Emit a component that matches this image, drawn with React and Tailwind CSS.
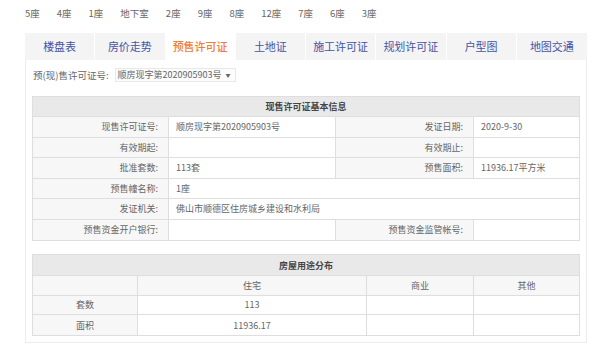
import React from "react";

const buildings = ["5座", "4座", "1座", "地下室", "2座", "9座", "8座", "12座", "7座", "6座", "3座"];
const tabs = ["楼盘表", "房价走势", "预售许可证", "土地证", "施工许可证", "规划许可证", "户型图", "地图交通"];

function Label({ children, w }) {
    return (
        <div className={`${w} h-full flex items-center justify-end pr-[10px] bg-[#f7f7f7] border-r border-[#dedede]`}>
            {children}
        </div>
    );
}

function Value({ children, w }) {
    return (
        <div className={`${w} h-full flex items-center pl-[7px] border-r border-[#dedede] last:border-r-0`}>
            {children}
        </div>
    );
}

export default function App() {
    return (
        <div className="w-[600px] h-[345px] overflow-hidden bg-white text-[#666] font-['Noto_Sans_CJK_SC','Liberation_Sans',sans-serif]">
            {/* building list */}
            <div className="flex items-center gap-[17px] pl-[25px] pt-[7px] h-[33px] text-[9.5px] leading-none pb-[12px]">
                {buildings.map((b) => (
                    <span key={b}>{b}</span>
                ))}
            </div>

            {/* tabs */}
            <div className="ml-[25px] w-[562px] h-[27px] grid grid-cols-8 bg-[#f4f4f4] text-[11px]">
                {tabs.map((t) => (
                    <div
                        key={t}
                        className={
                            t === "预售许可证"
                                ? "flex items-center justify-center bg-white text-[#f07d34] font-medium border-r border-white"
                                : "flex items-center justify-center text-[#4453a6] border-r border-white last:border-r-0"
                        }
                    >
                        {t}
                    </div>
                ))}
            </div>

            {/* card */}
            <div className="ml-[25px] w-[562px] h-[283px] border border-t-0 border-[#ececec] px-[6px] pt-[8px] text-[9px]">
                <div className="flex items-center h-[14px]">
                    <span className="ml-[1px] text-[9.5px]">预(现)售许可证号:</span>
                    <div className="ml-[6px] h-[14px] flex items-center border border-[#e8e8e8] bg-[#fcfcfc] pl-[2px] pr-[4px] text-[9px]">
                        顺房现字第2020905903号
                        <span className="ml-[4px] text-[5px]">▼</span>
                    </div>
                </div>

                {/* table 1 */}
                <div className="mt-[14px] border border-[#dedede] leading-none">
                    <div className="h-[20px] flex items-center justify-center bg-[#e9e9e9] border-b border-[#dedede] font-bold text-[#444]">
                        现售许可证基本信息
                    </div>
                    <div className="h-[20.5px] flex border-b border-[#dedede]">
                        <Label w="w-[136px]">现售许可证号:</Label>
                        <Value w="w-[167px]">顺房现字第2020905903号</Value>
                        <Label w="w-[138px]">发证日期:</Label>
                        <Value w="flex-1">2020-9-30</Value>
                    </div>
                    <div className="h-[20.5px] flex border-b border-[#dedede]">
                        <Label w="w-[136px]">有效期起:</Label>
                        <Value w="w-[167px]"></Value>
                        <Label w="w-[138px]">有效期止:</Label>
                        <Value w="flex-1"></Value>
                    </div>
                    <div className="h-[20.5px] flex border-b border-[#dedede]">
                        <Label w="w-[136px]">批准套数:</Label>
                        <Value w="w-[167px]">113套</Value>
                        <Label w="w-[138px]">预售面积:</Label>
                        <Value w="flex-1">11936.17平方米</Value>
                    </div>
                    <div className="h-[20.5px] flex border-b border-[#dedede]">
                        <Label w="w-[136px]">预售幢名称:</Label>
                        <Value w="flex-1">1座</Value>
                    </div>
                    <div className="h-[20.5px] flex border-b border-[#dedede]">
                        <Label w="w-[136px]">发证机关:</Label>
                        <Value w="flex-1">佛山市顺德区住房城乡建设和水利局</Value>
                    </div>
                    <div className="h-[20.5px] flex">
                        <Label w="w-[136px]">预售资金开户银行:</Label>
                        <Value w="w-[167px]"></Value>
                        <Label w="w-[138px]">预售资金监管帐号:</Label>
                        <Value w="flex-1"></Value>
                    </div>
                </div>

                {/* table 2 */}
                <div className="mt-[13px] border border-[#dedede] leading-none">
                    <div className="h-[21px] flex items-center justify-center bg-[#e9e9e9] border-b border-[#dedede] font-bold text-[#444]">
                        房屋用途分布
                    </div>
                    <div className="h-[19.5px] flex bg-[#f7f7f7] border-b border-[#dedede] text-center">
                        <div className="w-[105px] border-r border-[#dedede]"></div>
                        <div className="w-[229px] flex items-center justify-center border-r border-[#dedede]">住宅</div>
                        <div className="w-[107px] flex items-center justify-center border-r border-[#dedede]">商业</div>
                        <div className="flex-1 flex items-center justify-center">其他</div>
                    </div>
                    <div className="h-[19.5px] flex border-b border-[#dedede]">
                        <div className="w-[105px] flex items-center justify-center bg-[#f7f7f7] border-r border-[#dedede]">套数</div>
                        <div className="w-[229px] flex items-center justify-center border-r border-[#dedede]">113</div>
                        <div className="w-[107px] border-r border-[#dedede]"></div>
                        <div className="flex-1"></div>
                    </div>
                    <div className="h-[20px] flex">
                        <div className="w-[105px] flex items-center justify-center bg-[#f7f7f7] border-r border-[#dedede]">面积</div>
                        <div className="w-[229px] flex items-center justify-center border-r border-[#dedede]">11936.17</div>
                        <div className="w-[107px] border-r border-[#dedede]"></div>
                        <div className="flex-1"></div>
                    </div>
                </div>
            </div>
        </div>
    );
}
